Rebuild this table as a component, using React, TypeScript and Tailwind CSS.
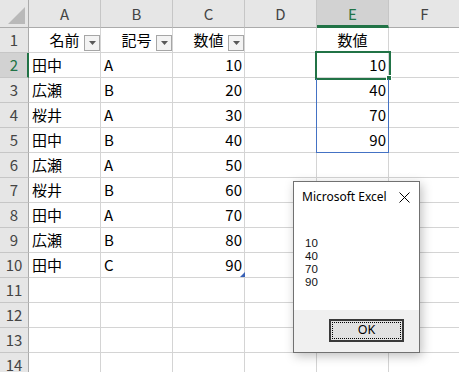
type Value = string | number | null

const COLS = ['A', 'B', 'C', 'D', 'E', 'F']

const DATA: Value[][] = [
  ['名前', '記号', '数値', null, '数値', null],
  ['田中', 'A', 10, null, 10, null],
  ['広瀬', 'B', 20, null, 40, null],
  ['桜井', 'A', 30, null, 70, null],
  ['田中', 'B', 40, null, 90, null],
  ['広瀬', 'A', 50, null, null, null],
  ['桜井', 'B', 60, null, null, null],
  ['田中', 'A', 70, null, null, null],
  ['広瀬', 'B', 80, null, null, null],
  ['田中', 'C', 90, null, null, null],
  [null, null, null, null, null, null],
  [null, null, null, null, null, null],
  [null, null, null, null, null, null],
  [null, null, null, null, null, null],
]

function FilterButton() {
  return (
    <span className="absolute right-0 bottom-[1px] w-[16px] h-[16px] border border-[#a6a6a6] bg-[#f3f3f3] flex items-center justify-center">
      <svg width="7" height="4" viewBox="0 0 7 4">
        <polygon points="0,0 7,0 3.5,4" fill="#595959" />
      </svg>
    </span>
  )
}

function DataCell({ value, row, col }: { value: Value; row: number; col: number }) {
  const isHeader = row === 1
  const isNum = typeof value === 'number'
  const align = isHeader ? 'justify-center' : isNum ? 'justify-end pr-[2px]' : 'justify-start pl-[3px]'
  return (
    <div className={`relative w-[72px] h-[25px] shrink-0 border-r border-b border-[#d4d4d4] bg-white flex ${align} leading-[24px] text-black`}>
      {value !== null && <span>{value}</span>}
      {isHeader && col < 3 && <FilterButton />}
    </div>
  )
}

function MessageBox() {
  return (
    <div className="absolute left-[293px] top-[181px] w-[127px] h-[172px] border border-[#717171] bg-white shadow-[2px_3px_10px_rgba(0,0,0,0.25)] flex flex-col font-['Noto_Sans','DejaVu_Sans',sans-serif] text-black">
      <div className="h-[128px] flex flex-col">
        <div className="flex items-center justify-between pl-[8px] pr-[9px] pt-[7px] h-[23px]">
          <span className="text-[12px] leading-[16px]">Microsoft Excel</span>
          <svg width="11" height="11" viewBox="0 0 11 11" className="mt-[1px]">
            <path d="M0.5 0.5 L10.5 10.5 M10.5 0.5 L0.5 10.5" stroke="#000" strokeWidth="1" />
          </svg>
        </div>
        <div className="pl-[11px] pt-[32px] font-['Liberation_Sans',Arial,sans-serif] text-[11.5px] leading-[13px] text-[#111]">
          <div>10</div>
          <div>40</div>
          <div>70</div>
          <div>90</div>
        </div>
      </div>
      <div className="flex-1 bg-[#f0f0f0] pl-[35px] pt-[9px]">
        <div className="w-[75px] h-[23px] border-2 border-[#3a3a3a] bg-[#e1e1e1] p-[1px]">
          <div className="w-full h-full border border-dotted border-black flex items-center justify-center text-[12.5px] leading-none">
            OK
          </div>
        </div>
      </div>
    </div>
  )
}

export default function App() {
  return (
    <div className="relative w-[459px] h-[372px] overflow-hidden bg-white font-['Noto_Sans_CJK_JP','Noto_Sans',sans-serif] text-[15px]">
      {/* column headers */}
      <div className="flex h-[28px]">
        <div className="w-[29px] h-[28px] shrink-0 bg-[#e6e6e6] border-r border-b border-[#ababab] flex items-end justify-end pr-[3px] pb-[3px]">
          <svg width="17" height="17" viewBox="0 0 17 17">
            <polygon points="17,0 17,17 0,17" fill="#b9b9b9" />
          </svg>
        </div>
        {COLS.map((c) => {
          const active = c === 'E'
          return (
            <div
              key={c}
              className={`w-[72px] h-[28px] shrink-0 flex justify-center leading-[27px] border-r ${
                active
                  ? 'bg-[#d2d2d2] text-[#217346] border-r-[#c6c6c6] border-b-[3px] border-b-[#217346] leading-[25px]'
                  : 'bg-[#e6e6e6] text-[#444] border-r-[#c6c6c6] border-b border-b-[#ababab]'
              }`}
            >
              {c}
            </div>
          )
        })}
      </div>

      {/* rows */}
      {DATA.map((cells, i) => {
        const row = i + 1
        const active = row === 2
        return (
          <div key={row} className="flex h-[25px]">
            <div
              className={`w-[29px] h-[25px] shrink-0 flex justify-center leading-[24px] border-b border-b-[#c6c6c6] ${
                active
                  ? 'bg-[#d2d2d2] text-[#217346] border-r-[2px] border-r-[#217346] pl-[1px]'
                  : 'bg-[#e6e6e6] text-[#444] border-r border-r-[#ababab]'
              }`}
            >
              {row}
            </div>
            {cells.map((v, j) => (
              <DataCell key={j} value={v} row={row} col={j} />
            ))}
          </div>
        )
      })}

      {/* selection E2 */}
      <div className="absolute left-[315px] top-[51px] w-[76px] h-[29px] border-2 border-[#217346]" />
      <div className="absolute left-[386px] top-[75px] w-[6px] h-[6px] bg-[#217346] border border-white" />
      {/* reference range E3:E5 */}
      <div className="absolute left-[316px] top-[79px] w-[73px] h-[74px] border-l border-r border-b border-[#4472c4]" />
      {/* table resize handle */}
      <svg className="absolute left-[240px] top-[272px]" width="5" height="5" viewBox="0 0 5 5">
        <polygon points="5,0 5,5 0,5" fill="#3a62b6" />
      </svg>

      <MessageBox />
    </div>
  )
}
